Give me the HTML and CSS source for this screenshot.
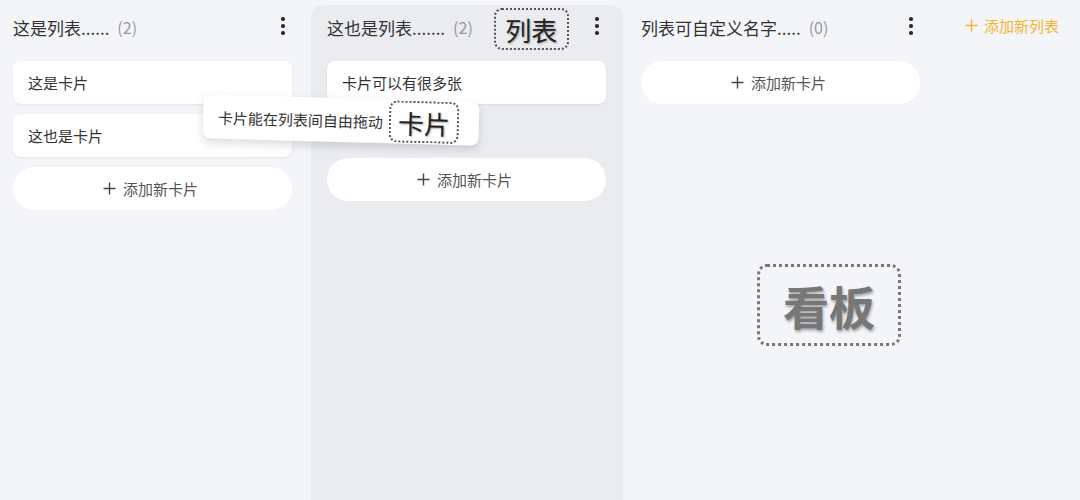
FILE: index.html
```html
<!DOCTYPE html>
<html lang="zh">
<head>
<meta charset="utf-8">
<link rel="stylesheet" href="styles.css">
</head>
<body>
<div class="page">
  <div class="board">
    <section class="column">
      <header class="column-head">
        <span class="title">这是列表......</span><span class="count">(2)</span>
        <span class="dots"><i></i><i></i><i></i></span>
      </header>
      <div class="cards">
        <div class="card">这是卡片</div>
        <div class="card">这也是卡片</div>
        <div class="add-card"><svg width="13" height="13" viewBox="0 0 13 13"><path d="M6.5 0.5v12M0.5 6.5h12" stroke="#444" stroke-width="1.4"/></svg>添加新卡片</div>
      </div>
    </section>
    <section class="column active">
      <header class="column-head">
        <span class="title">这也是列表.......</span><span class="count">(2)</span>
        <span class="tag tag-list">列表</span>
        <span class="dots"><i></i><i></i><i></i></span>
      </header>
      <div class="cards">
        <div class="card">卡片可以有很多张</div>
        <div class="placeholder"></div>
        <div class="add-card"><svg width="13" height="13" viewBox="0 0 13 13"><path d="M6.5 0.5v12M0.5 6.5h12" stroke="#444" stroke-width="1.4"/></svg>添加新卡片</div>
      </div>
    </section>
    <section class="column">
      <header class="column-head">
        <span class="title">列表可自定义名字.....</span><span class="count">(0)</span>
        <span class="dots"><i></i><i></i><i></i></span>
      </header>
      <div class="cards">
        <div class="add-card"><svg width="13" height="13" viewBox="0 0 13 13"><path d="M6.5 0.5v12M0.5 6.5h12" stroke="#444" stroke-width="1.4"/></svg>添加新卡片</div>
      </div>
    </section>
    <div class="add-list"><svg width="13" height="13" viewBox="0 0 13 13"><path d="M6.5 0.5v12M0.5 6.5h12" stroke="#f3b531" stroke-width="1.4"/></svg>添加新列表</div>
  </div>
  <div class="drag-card">卡片能在列表间自由拖动<span class="tag tag-card">卡片</span></div>
  <div class="tag tag-board">看板</div>
</div>
</body>
</html>
```
FILE: styles.css
```css
html, body {
  margin: 0;
  padding: 0;
}
body {
  background: #f4f5f8;
  font-family: "Noto Sans CJK SC", "Noto Sans", sans-serif;
  color: #333;
  overflow: hidden;
}
.page {
  position: relative;
  width: 1080px;
  height: 500px;
}
.board {
  display: flex;
  gap: 2px;
  padding-top: 5px;
  margin-left: -3px;
  height: 500px;
  box-sizing: border-box;
}
.column {
  width: 312px;
  flex: none;
  box-sizing: border-box;
  padding: 0 17px 0 16px;
  border-radius: 12px 12px 0 0;
}
.column.active {
  background: #ebecf0;
}
.column-head {
  height: 44px;
  display: flex;
  align-items: center;
  margin-bottom: 12px;
}
.title {
  font-size: 17px;
  color: #333;
  white-space: nowrap;
}
.count {
  font-size: 16px;
  color: #9a9a9a;
  margin-left: 8px;
}
.dots {
  margin-left: auto;
  width: 18px;
  display: flex;
  flex-direction: column;
  align-items: center;
  gap: 3.8px;
  margin-top: -2px;
}
.dots i {
  display: block;
  width: 3.4px;
  height: 3.4px;
  border-radius: 50%;
  background: #2c2c2c;
}
.cards {
  display: flex;
  flex-direction: column;
  gap: 10px;
}
.card {
  height: 43px;
  background: #fff;
  border-radius: 8px;
  display: flex;
  align-items: center;
  padding-left: 15px;
  font-size: 15px;
  color: #333;
  box-shadow: 0 1px 3px rgba(0, 0, 0, 0.07);
}
.placeholder {
  height: 34px;
}
.add-card {
  height: 43px;
  background: #fff;
  border-radius: 22px;
  display: flex;
  align-items: center;
  justify-content: center;
  gap: 7px;
  font-size: 15px;
  color: #555;
  padding-right: 4px;
}
.add-list {
  margin-left: 26px;
  height: 40px;
  display: flex;
  align-items: center;
  gap: 6px;
  font-size: 15px;
  color: #f3b531;
  white-space: nowrap;
}
.tag {
  border: 2px dotted #555;
  border-radius: 8px;
  box-sizing: border-box;
  display: flex;
  align-items: center;
  justify-content: center;
  color: #222;
  text-shadow: 1px 1px 2px rgba(0, 0, 0, 0.35);
}
.tag-list {
  width: 75px;
  height: 42px;
  margin-left: 21px;
  margin-top: 4px;
  font-size: 26px;
  font-weight: 400;
}
.drag-card {
  position: absolute;
  left: 203px;
  top: 98px;
  width: 276px;
  height: 44px;
  box-sizing: border-box;
  background: #fff;
  border-radius: 8px;
  display: flex;
  align-items: center;
  padding-left: 15px;
  font-size: 15px;
  color: #333;
  box-shadow: 0 4px 10px rgba(0, 0, 0, 0.14);
  transform: rotate(1.5deg);
}
.tag-card {
  width: 70px;
  height: 42px;
  margin-left: 6px;
  font-size: 26px;
  font-weight: 400;
}
.tag-board {
  position: absolute;
  left: 757px;
  top: 264px;
  width: 144px;
  height: 82px;
  border: 3px dotted #777;
  border-radius: 10px;
  font-size: 46px;
  font-weight: 700;
  color: #777;
  text-shadow: 1px 2px 3px rgba(0, 0, 0, 0.35);
}
```
